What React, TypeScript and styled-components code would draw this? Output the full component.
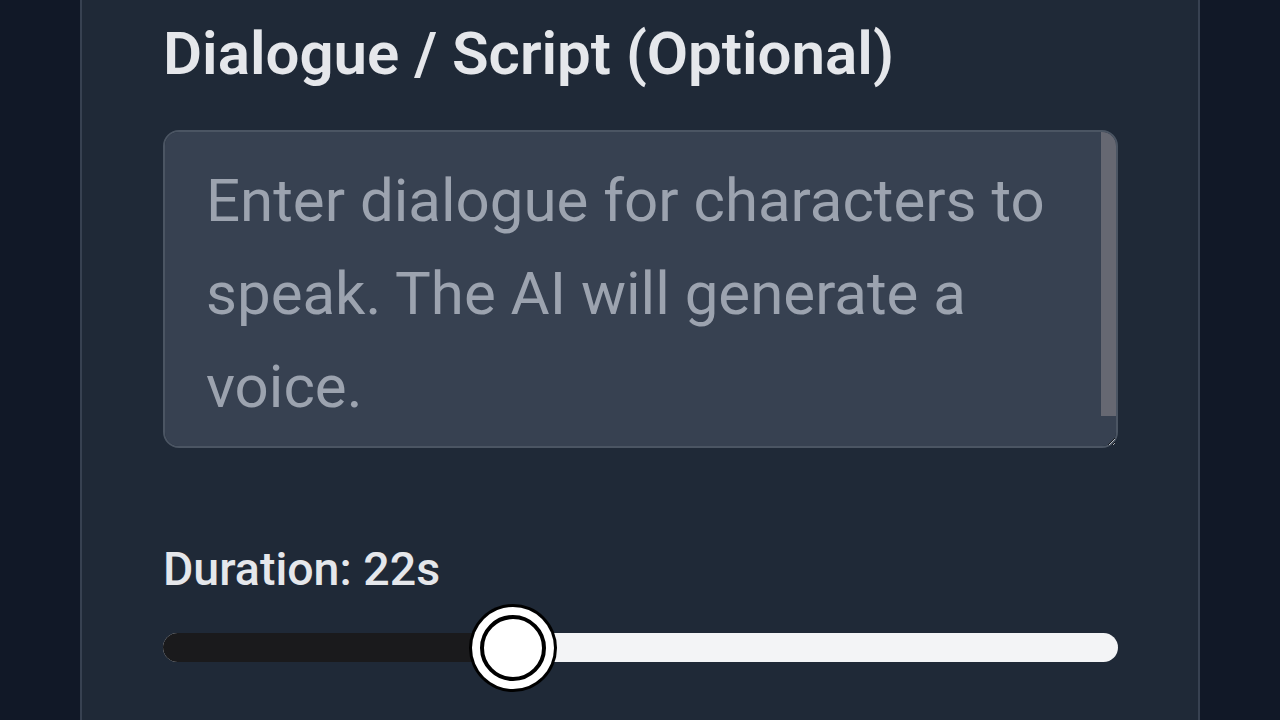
import React from 'react';
import styled, { createGlobalStyle } from 'styled-components';

const GlobalStyle = createGlobalStyle`
  html, body {
    margin: 0;
    padding: 0;
    background: #111827;
    font-family: Roboto, "Noto Sans", sans-serif;
  }
`;

const Page = styled.div`
  height: 720px;
  overflow: hidden;
  display: flex;
  justify-content: center;
`;

const Panel = styled.div`
  width: 1120px;
  box-sizing: border-box;
  background: #1f2937;
  border-left: 2px solid #374151;
  border-right: 2px solid #374151;
  padding: 19px 80px 0 81px;
  display: flex;
  flex-direction: column;
`;

const Heading = styled.h2`
  margin: 0;
  font-size: 60px;
  line-height: 70px;
  font-weight: 600;
  color: #e5e7eb;
`;

const Field = styled.div`
  position: relative;
  margin-top: 41px;
`;

const Script = styled.textarea`
  display: block;
  height: 318px;
  box-sizing: border-box;
  width: 100%;
  resize: vertical;
  overflow-y: scroll;
  background: #374151;
  border: 2px solid #4b5563;
  border-radius: 16px;
  padding: 22px 41px;
  font-family: Roboto, "Noto Sans", sans-serif;
  font-size: 60px;
  line-height: 93px;
  color: #f3f4f6;
  outline: none;

  &::placeholder {
    color: #9ca3af;
  }
`;

/* headless browser hides native scrollbars, so the bar is drawn over the field */
const ScrollThumb = styled.div`
  position: absolute;
  top: 2px;
  right: 2px;
  width: 15px;
  height: 284px;
  background: #666872;
  border-top-right-radius: 14px;
  pointer-events: none;
`;

const Label = styled.div`
  margin-top: 94px;
  font-size: 46.5px;
  line-height: 54px;
  font-weight: 500;
  color: #e5e7eb;
`;

const Track = styled.div`
  position: relative;
  margin-top: 37px;
  height: 29px;
  border-radius: 15px;
  background: #f3f4f6;
`;

const Fill = styled.div`
  height: 100%;
  border-radius: 15px 0 0 15px;
  background: #1a1a1c;
`;

const Thumb = styled.div`
  position: absolute;
  top: 50%;
  width: 66px;
  height: 66px;
  box-sizing: border-box;
  border-radius: 50%;
  background: #fff;
  border: 4px solid #000;
  box-shadow: 0 0 0 8px #fff, 0 0 0 11px #000;
  transform: translate(-50%, -50%);
`;

const min = 0;
const max = 60;

export default function App() {
  const duration = 22;
  const pct = ((duration - min) / (max - min)) * 100;
  return (
    <Page>
      <GlobalStyle />
      <Panel>
        <Heading>Dialogue / Script (Optional)</Heading>
        <Field>
          <Script placeholder="Enter dialogue for characters to speak. The AI will generate a voice." />
          <ScrollThumb />
        </Field>
        <Label>Duration: {duration}s</Label>
        <Track>
          <Fill style={{ width: `${pct}%` }} />
          <Thumb style={{ left: `${pct}%` }} />
        </Track>
      </Panel>
    </Page>
  );
}
